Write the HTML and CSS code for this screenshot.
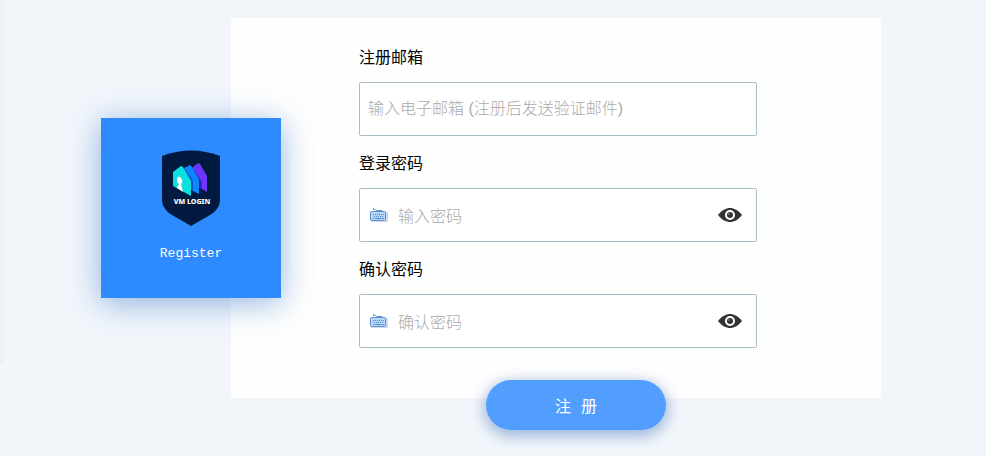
FILE: index.html
```html
<!doctype html>
<html lang="zh-CN">
  <head>
    <meta charset="UTF-8" />
    <meta name="viewport" content="width=device-width, initial-scale=1.0" />
    <title>Register</title>
    <link rel="stylesheet" href="styles.css">
  </head>
  <body>
    <main class="register">
      <div class="brand">
        <svg class="brand-logo" viewBox="0 0 58 76" role="img" aria-label="VM LOGIN">
          <path fill="#021a40" d="M0 6Q29-5 58 6V50C58 57 53 62 48 65L29 76 10 65C5 62 0 57 0 50Z" />
          <path fill="#6d35ff" d="M30 18L36 13 38 14 45 26V42L38 38 36 26Z" />
          <path fill="#4420b5" d="M30 18L37 27 40 32V39L36 37Z" />
          <path fill="#0a86ff" d="M22 18L28 15 30 17 37 29V44L29 40Z" />
          <path fill="#0757c6" d="M22 18L28 26 31 31V41L28 39Z" />
          <path fill="#0be0df" d="M11 22L19 16 21 17 29 31V46L11 36Z" />
          <path fill="#fff" d="M15 29C15 26 19 26 20 30C21 32 20 33 19 34L21 42 15 38 17 34C15 33 15 31 15 29Z" />
          <text class="logo-text" x="30" y="54" text-anchor="middle">VM LOGIN</text>
        </svg>
        <span class="brand-title">Register</span>
      </div>

      <form class="card" id="registerForm">
        <div class="group">
          <label for="email">注册邮箱</label>
          <div class="field">
            <input type="email" id="email" name="email" placeholder="输入电子邮箱 (注册后发送验证邮件)" required />
          </div>
        </div>

        <div class="group">
          <label for="password">登录密码</label>
          <div class="field">
            <svg class="keyboard" viewBox="0 0 18 16" aria-hidden="true">
              <path fill="none" stroke="#5d92d2" d="M3.5 1V2.5H5.5L6.5 3.5H12L13.5 5" />
              <rect x="1" y="5" width="17" height="10" rx="1" fill="#cbd9ec" />
              <rect x=".5" y="4.5" width="15" height="9" rx="1" fill="#b5d5f8" stroke="#5d92d2" />
              <path stroke="#568bcb" stroke-dasharray="1 1" d="M3 7.5H14M4 9.5H14" />
              <path stroke="#568bcb" d="M3 11.5H4M5 11.5H11M12 11.5H14" />
            </svg>
            <input type="password" id="password" name="password" placeholder="输入密码" required />
            <button class="toggle" type="button" aria-label="显示密码">
              <svg class="eye" viewBox="0 0 24 16" aria-hidden="true">
                <path fill="#333" d="M0 8C4 3 8 1 12 1S20 3 24 8C20 13 16 15 12 15S4 13 0 8Z" />
                <circle cx="12" cy="8" r="4" fill="#333" stroke="#fff" stroke-width="2" />
                <circle cx="11" cy="7" r="1" fill="#777" />
              </svg>
            </button>
          </div>
        </div>

        <div class="group">
          <label for="confirm">确认密码</label>
          <div class="field">
            <svg class="keyboard" viewBox="0 0 18 16" aria-hidden="true">
              <path fill="none" stroke="#5d92d2" d="M3.5 1V2.5H5.5L6.5 3.5H12L13.5 5" />
              <rect x="1" y="5" width="17" height="10" rx="1" fill="#cbd9ec" />
              <rect x=".5" y="4.5" width="15" height="9" rx="1" fill="#b5d5f8" stroke="#5d92d2" />
              <path stroke="#568bcb" stroke-dasharray="1 1" d="M3 7.5H14M4 9.5H14" />
              <path stroke="#568bcb" d="M3 11.5H4M5 11.5H11M12 11.5H14" />
            </svg>
            <input type="password" id="confirm" name="confirm" placeholder="确认密码" required />
            <button class="toggle" type="button" aria-label="显示密码">
              <svg class="eye" viewBox="0 0 24 16" aria-hidden="true">
                <path fill="#333" d="M0 8C4 3 8 1 12 1S20 3 24 8C20 13 16 15 12 15S4 13 0 8Z" />
                <circle cx="12" cy="8" r="4" fill="#333" stroke="#fff" stroke-width="2" />
                <circle cx="11" cy="7" r="1" fill="#777" />
              </svg>
            </button>
          </div>
        </div>

        <div class="actions">
          <button class="submit" type="submit"><span>注</span><span>册</span></button>
        </div>
      </form>
    </main>

    <script>
      document.querySelectorAll(".toggle").forEach((button) => {
        button.addEventListener("click", () => {
          const input = button.previousElementSibling;
          input.type = input.type === "password" ? "text" : "password";
        });
      });
    </script>
  </body>
</html>
```
FILE: styles.css
```css
* {
  box-sizing: border-box;
}

body {
  margin: 0;
  font-family: "Liberation Sans", "Noto Sans CJK SC", sans-serif;
  font-size: 16px;
  font-weight: 300;
  color: #000;
  background: linear-gradient(to right, #ebeff5, #f2f6fb) no-repeat 0 0 / 5px 364px #f2f6fb;
}

.register {
  display: flex;
  align-items: flex-start;
  max-width: 986px;
  margin: 0 auto;
  padding: 18px 105px 58px 101px;
}

.brand {
  display: flex;
  flex: none;
  flex-direction: column;
  align-items: center;
  gap: 18px;
  width: 180px;
  height: 180px;
  margin: 100px -50px 0 0;
  padding-top: 32px;
  background-color: #2d8aff;
  box-shadow: 0 5px 30px rgba(20, 95, 190, 0.45);
  z-index: 1;
}

.brand-logo {
  width: 58px;
  height: 76px;
}

.logo-text {
  font-family: "Noto Sans", sans-serif;
  font-size: 7px;
  font-weight: 800;
  fill: #fff;
}

.brand-title {
  font-family: "Liberation Mono", monospace;
  font-size: 13px;
  font-weight: 400;
  line-height: 20px;
  color: #fff;
}

.card {
  flex: 1;
  min-width: 0;
  padding: 29px 124px 0 128px;
  background-color: #fefefe;
}

.group {
  margin-bottom: 17px;
}

.group label {
  display: block;
  margin-bottom: 13px;
  font-weight: 400;
  line-height: 22px;
}

.field {
  display: flex;
  align-items: center;
  height: 54px;
  padding: 0 14px 0 8px;
  border: 1px solid #a9bdc8;
  border-radius: 2px;
  background-color: #fff;
}

.field input {
  flex: 1;
  min-width: 0;
  height: 52px;
  padding: 0;
  border: none;
  outline: none;
  font: inherit;
  background: transparent;
}

.field input[type="password"] {
  padding-top: 4px;
}

.field input::placeholder {
  color: #aaa;
}

.keyboard {
  flex: none;
  width: 18px;
  height: 16px;
  margin: 0 10px 0 2px;
}

.toggle {
  display: flex;
  padding: 0;
  border: none;
  background: none;
  cursor: pointer;
}

.eye {
  width: 24px;
  height: 16px;
}

.actions {
  display: flex;
  justify-content: center;
  margin-bottom: -32px;
  padding: 15px 0 0 36px;
}

.submit {
  display: flex;
  align-items: center;
  justify-content: center;
  gap: 10px;
  width: 180px;
  height: 50px;
  border: none;
  border-radius: 25px;
  font: inherit;
  font-weight: 400;
  color: #fff;
  background-color: #529eff;
  box-shadow:
    0 4px 16px rgba(30, 95, 190, 0.45),
    0 4px 10px 8px rgba(0, 0, 0, 0.03);
  cursor: pointer;
}

.submit:hover {
  background-color: #3f90f8;
}
```
